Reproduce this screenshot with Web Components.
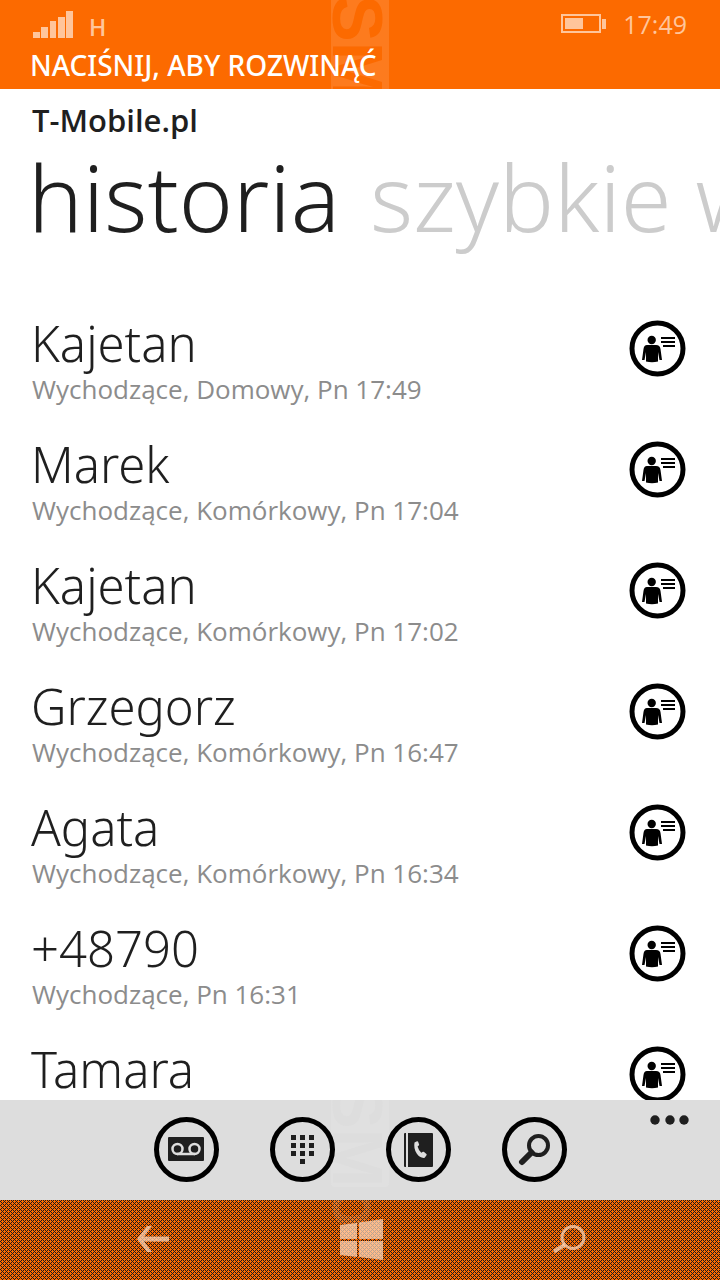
<!DOCTYPE html>
<html lang="pl">
<head>
<meta charset="utf-8">
<meta name="viewport" content="width=device-width, initial-scale=1">
<title>Telefon</title>
<style>
    body {
        margin: 0;
        --accent: #fc6a00;
        --ink: #1f1f1f;
        --dim: #8c8c8c;
        --soft: #ffc59b;
        --chrome: #dddddd;
        --display: "Noto Sans", "Open Sans", sans-serif;
        color: var(--ink);
        background: #fff;
        font-family: "Open Sans", "Noto Sans", sans-serif;
    }
</style>
</head>
<body>
<phone-app></phone-app>

<script>
// faint vertical stamp behind the bars
class StampMark extends HTMLElement {
    connectedCallback() {
        this.attachShadow({mode: 'open'});
        this.shadowRoot.innerHTML = `
        <style>
        :host {
            position: absolute;
            left: 50%;
            top: var(--stamp-top, 0);
            width: 52px;
            margin-left: -29px;
            padding-right: 6px;
            pointer-events: none;
            font: bold 70px/52px "Liberation Sans", sans-serif;
            writing-mode: vertical-rl;
            color: var(--stamp-ink);
            background: var(--stamp-fill, transparent);
            border-radius: 4px;
        }
        </style>
        <slot></slot>
        `;
    }
}

class StatusBar extends HTMLElement {
    connectedCallback() {
        this.attachShadow({mode: 'open'});
        this.shadowRoot.innerHTML = `
        <style>
        :host {
            display: block;
            position: relative;
            flex: none;
            height: 89px;
            overflow: hidden;
            background: var(--accent);
            --stamp-top: -5px;
            --stamp-fill: #fd7b1e;
            --stamp-ink: var(--accent);
        }
        .row {
            position: relative;
            display: flex;
            align-items: center;
            height: 48px;
            padding: 0 33px;
            color: var(--soft);
        }
        .net {
            margin: 6px auto 0 16px;
            font-size: 23px;
            font-weight: 600;
            line-height: 28px;
        }
        time {
            margin-left: 16px;
            font-size: 25px;
            line-height: 32px;
        }
        button {
            position: relative;
            display: block;
            padding: 0 30px;
            border: 0;
            background: none;
            color: #fff;
            font: 500 28px/34px var(--display);
        }
        </style>
        <stamp-mark>SM</stamp-mark>
        <div class="row">
            <svg width="40" height="28" fill="currentColor" aria-hidden="true">
                <path d="M0 22h7v6H0zM8 17h7v11H8zM17 11h6v17h-6zM25 7h7v21h-7zM33 1h7v27h-7z"/>
            </svg>
            <span class="net">H</span>
            <svg width="46" height="20" aria-hidden="true">
                <rect x="1" y="1" width="38" height="17" fill="none" stroke="currentColor" stroke-width="2"/>
                <path d="M4 4h18v11H4zM41 5h4v10h-4z" fill="currentColor"/>
            </svg>
            <time>17:49</time>
        </div>
        <button type="button">NACIŚNIJ, ABY ROZWINĄĆ</button>
        `;
    }
}

class PivotHeader extends HTMLElement {
    connectedCallback() {
        this.attachShadow({mode: 'open'});
        this.shadowRoot.innerHTML = `
        <style>
        :host {
            display: block;
            flex: none;
            padding: 11px 0 16px 32px;
            overflow: hidden;
        }
        p {
            margin: 0;
            font-size: 31px;
            font-weight: 600;
            line-height: 40px;
        }
        nav {
            display: flex;
            gap: 30px;
            margin-left: -4px;
            white-space: nowrap;
        }
        a {
            flex: none;
            color: #cccccc;
            font-family: var(--display);
            font-size: 92px;
            font-weight: 320;
            line-height: 114px;
            text-decoration: none;
        }
        a[aria-current] {
            color: var(--ink);
        }
        </style>
        <p><slot></slot></p>
        <nav>
            <a href="#historia" aria-current="page">historia</a>
            <a href="#szybkie">szybkie wybieranie</a>
        </nav>
        `;
    }
}

class CallItem extends HTMLElement {
    connectedCallback() {
        this.attachShadow({mode: 'open'});
        this.shadowRoot.innerHTML = `
        <style>
        :host {
            display: flex;
            justify-content: space-between;
            align-items: flex-start;
            height: 121px;
            padding: 0 34px 0 32px;
        }
        .name {
            margin-left: -1px;
            font-family: var(--display);
            font-size: 49px;
            font-weight: 320;
            line-height: 68px;
        }
        .info {
            color: var(--dim);
            font-size: 26px;
            line-height: 24px;
        }
        button {
            display: block;
            margin-top: 11px;
            padding: 0;
            border: 0;
            background: none;
            color: #000;
        }
        svg {
            display: block;
        }
        </style>
        <div>
            <div class="name"><slot></slot></div>
            <div class="info"><slot name="info"></slot></div>
        </div>
        <button type="button" aria-label="Kontakt">
            <svg width="57" height="57" viewBox="0 0 57 57" fill="currentColor">
                <circle cx="28.500" cy="28.500" r="25.500" fill="none" stroke="currentColor" stroke-width="5"/>
                <circle cx="22.700" cy="20" r="4.200"/>
                <path d="M18 25h9q4 0 4.500 4l1.500 11h-2.500l-1.500-8v9.500q-6 1.500-12 0V32l-1.500 8H13l1.500-11q.5-4 3.500-4z"/>
                <path d="M32 17h14v2H32zM32 21h14v2H32zM34 25h12v2H34z"/>
            </svg>
        </button>
        `;
    }
}

class RoundButton extends HTMLElement {
    connectedCallback() {
        this.attachShadow({mode: 'open'});
        this.shadowRoot.innerHTML = `
        <style>
        :host {
            display: block;
        }
        button {
            display: grid;
            place-items: center;
            box-sizing: border-box;
            width: 65px;
            height: 65px;
            padding: 0;
            border: 5px solid #000;
            border-radius: 50%;
            background: none;
            color: var(--ink);
        }
        </style>
        <button type="button" aria-label="${this.getAttribute('label')}"><slot></slot></button>
        `;
    }
}

class AppBar extends HTMLElement {
    connectedCallback() {
        this.attachShadow({mode: 'open'});
        this.shadowRoot.innerHTML = `
        <style>
        :host {
            position: relative;
            display: grid;
            grid-template-columns: 1fr auto 1fr;
            flex: none;
            height: 100px;
            overflow: hidden;
            background: var(--chrome);
            --stamp-top: -18px;
            --stamp-fill: #e0e0e0;
            --stamp-ink: var(--chrome);
        }
        .actions {
            position: relative;
            grid-column: 2;
            display: flex;
            gap: 51px;
            padding-top: 17px;
        }
        svg {
            display: block;
        }
        .more {
            justify-self: end;
            align-self: start;
            padding: 15px 31px 15px 0;
            border: 0;
            background: none;
            color: var(--ink);
        }
        </style>
        <stamp-mark>SM</stamp-mark>
        <div class="actions">
            <round-button label="Poczta głosowa">
                <svg width="36" height="26" viewBox="0 0 36 26">
                    <rect width="36" height="24" rx="1" fill="currentColor"/>
                    <g fill="none" stroke="#dddddd" stroke-width="2.500">
                        <circle cx="9.500" cy="12" r="5"/>
                        <circle cx="26.500" cy="12" r="5"/>
                        <path d="M9 17h18"/>
                    </g>
                </svg>
            </round-button>
            <round-button label="Klawiatura">
                <svg width="23" height="31" viewBox="0 0 23 31">
                    <path fill="currentColor" d="M0 1h5v5H0zM9 1h5v5H9zM18 1h5v5h-5zM0 9h5v5H0zM9 9h5v5H9zM18 9h5v5h-5zM0 17h5v5H0zM9 17h5v5H9zM18 17h5v5h-5zM9 25h5v5H9z"/>
                </svg>
            </round-button>
            <round-button label="Książka telefoniczna">
                <svg width="29" height="34" viewBox="0 0 29 34">
                    <path fill="currentColor" d="M1 0h1v34H1q-1 0-1-1V1q0-1 1-1zM4 0h24q1 0 1 1v32q0 1-1 1H4z"/>
                    <path fill="#dddddd" d="M10.500 9.500l2.500-1.200q.8-.2 1.100.5l1 2.700q.2.700-.4 1.100l-1.100.9q.8 3.400 3.700 6.200l1.600-.9q.7-.3 1.200.2l2.300 2.100q.6.600.1 1.200l-1.800 2.500q-4.600.7-8-4.300-3.300-5-2.200-11z"/>
                </svg>
            </round-button>
            <round-button label="Szukaj">
                <svg width="32" height="32" viewBox="0 0 32 32" fill="none" stroke="currentColor">
                    <circle cx="20.500" cy="11.500" r="9.500" stroke-width="4"/>
                    <path d="M13.500 18.500L4 28" stroke-width="6" stroke-linecap="round"/>
                </svg>
            </round-button>
        </div>
        <button type="button" class="more" aria-label="Więcej">
            <svg width="39" height="10" viewBox="0 0 39 10" fill="currentColor">
                <circle cx="5" cy="5" r="4.700"/>
                <circle cx="20" cy="5" r="4.700"/>
                <circle cx="34" cy="5" r="4.700"/>
            </svg>
        </button>
        `;
    }
}

class SystemKeys extends HTMLElement {
    connectedCallback() {
        this.attachShadow({mode: 'open'});
        this.shadowRoot.innerHTML = `
        <style>
        :host {
            position: relative;
            display: grid;
            grid-template-columns: repeat(3, 1fr);
            flex: none;
            box-sizing: border-box;
            height: 80px;
            padding: 0 47px 2px 49px;
            overflow: hidden;
            background: var(--accent);
            --stamp-top: -14px;
            --stamp-ink: rgba(255, 255, 255, 0.1);
        }
        .dither {
            position: absolute;
            inset: 0;
            width: 100%;
            height: 100%;
        }
        button {
            position: relative;
            display: grid;
            place-items: center;
            padding: 0;
            border: 0;
            background: none;
            color: rgba(255, 222, 196, 0.7);
        }
        </style>
        <svg class="dither" aria-hidden="true" shape-rendering="crispEdges">
            <pattern id="dots" width="4" height="4" patternUnits="userSpaceOnUse">
                <path d="M1 0h1v1H1zM3 0h1v1H3zM0 1h1v1H0zM1 2h1v1H1zM3 2h1v1H3zM2 3h1v1H2z" fill="#1a1a1a"/>
            </pattern>
            <rect width="100%" height="100%" fill="url(#dots)"/>
        </svg>
        <stamp-mark>o</stamp-mark>
        <button type="button" aria-label="Wstecz">
            <svg width="32" height="28" viewBox="0 0 32 28" fill="currentColor">
                <path d="M0 14L10 1h5L7 11.500h25v5H7L15 27h-5z"/>
            </svg>
        </button>
        <button type="button" aria-label="Start">
            <svg width="43" height="41" viewBox="0 0 43 41" fill="currentColor">
                <path d="M0 6l17-2v16H0zM19 3.500L43 0v20H19zM0 22h17v16L0 36zM19 22h24v19l-24-3z"/>
            </svg>
        </button>
        <button type="button" aria-label="Szukaj">
            <svg width="34" height="28" viewBox="0 0 34 28" fill="none" stroke="currentColor" stroke-width="3">
                <circle cx="21" cy="12.500" r="11"/>
                <path d="M12.500 20L2 26.500" stroke-width="4"/>
            </svg>
        </button>
        `;
    }
}

class PhoneApp extends HTMLElement {
    connectedCallback() {
        const calls = [
            ['Kajetan', 'Wychodzące, Domowy, Pn 17:49'],
            ['Marek', 'Wychodzące, Komórkowy, Pn 17:04'],
            ['Kajetan', 'Wychodzące, Komórkowy, Pn 17:02'],
            ['Grzegorz', 'Wychodzące, Komórkowy, Pn 16:47'],
            ['Agata', 'Wychodzące, Komórkowy, Pn 16:34'],
            ['+48790', 'Wychodzące, Pn 16:31'],
            ['Tamara', '']
        ];
        this.attachShadow({mode: 'open'});
        this.shadowRoot.innerHTML = `
        <style>
        :host {
            display: flex;
            flex-direction: column;
            height: 100vh;
        }
        main {
            flex: 1;
            min-height: 0;
            padding-top: 39px;
            overflow: hidden;
        }
        </style>
        <status-bar></status-bar>
        <pivot-header>T-Mobile.pl</pivot-header>
        <main>
            ${calls.map(([name, info]) => `<call-item>${name}<span slot="info">${info}</span></call-item>`).join('')}
        </main>
        <app-bar></app-bar>
        <system-keys></system-keys>
        `;
    }
}

customElements.define('stamp-mark', StampMark);
customElements.define('status-bar', StatusBar);
customElements.define('pivot-header', PivotHeader);
customElements.define('call-item', CallItem);
customElements.define('round-button', RoundButton);
customElements.define('app-bar', AppBar);
customElements.define('system-keys', SystemKeys);
customElements.define('phone-app', PhoneApp);
</script>
</body>
</html>
